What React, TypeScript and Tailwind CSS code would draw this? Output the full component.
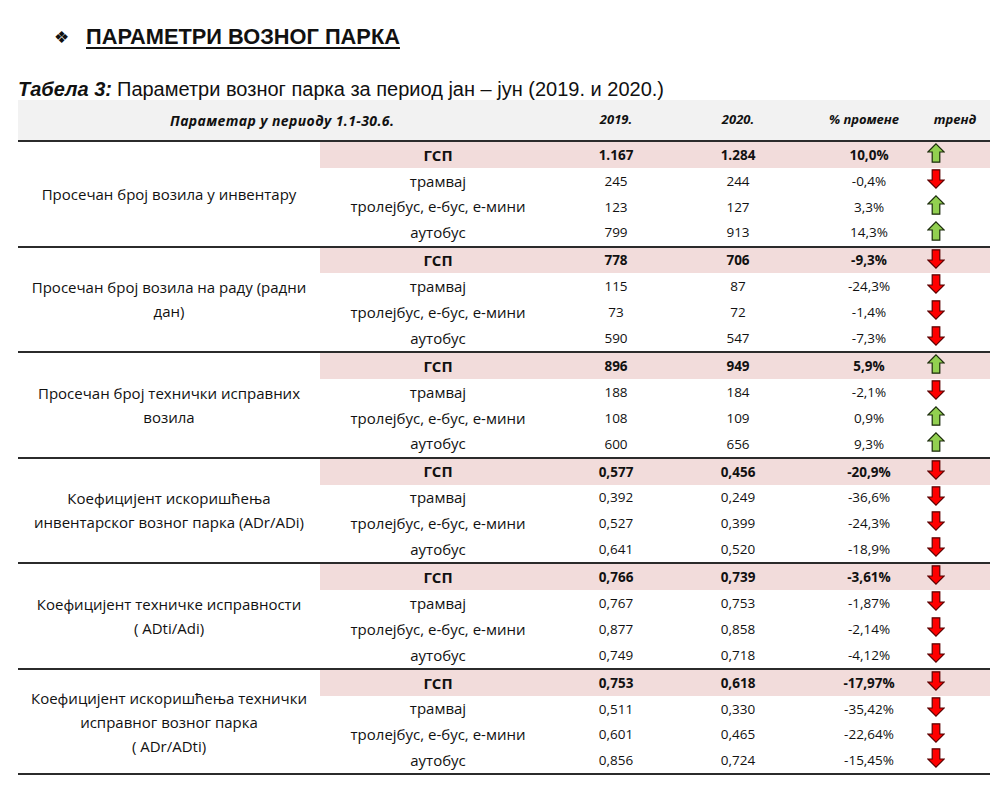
import React from 'react';

// Parameters of the vehicle fleet, Jan–Jun 2019 vs 2020
type Row = { type: string; y19: string; y20: string; pct: string; up: boolean };
type Group = { label: string[]; rows: Row[] };

const TYPES = ['ГСП', 'трамвај', 'тролејбус, е-бус, е-мини', 'аутобус'];

const mk = (data: [string, string, string, boolean][]): Row[] =>
  data.map((d, i) => ({ type: TYPES[i], y19: d[0], y20: d[1], pct: d[2], up: d[3] }));

const groups: Group[] = [
  {
    label: ['Просечан број возила у инвентару'],
    rows: mk([
      ['1.167', '1.284', '10,0%', true],
      ['245', '244', '-0,4%', false],
      ['123', '127', '3,3%', true],
      ['799', '913', '14,3%', true],
    ]),
  },
  {
    label: ['Просечан број возила на раду (радни', 'дан)'],
    rows: mk([
      ['778', '706', '-9,3%', false],
      ['115', '87', '-24,3%', false],
      ['73', '72', '-1,4%', false],
      ['590', '547', '-7,3%', false],
    ]),
  },
  {
    label: ['Просечан број технички исправних', 'возила'],
    rows: mk([
      ['896', '949', '5,9%', true],
      ['188', '184', '-2,1%', false],
      ['108', '109', '0,9%', true],
      ['600', '656', '9,3%', true],
    ]),
  },
  {
    label: ['Коефицијент искоришћења', 'инвентарског возног парка (ADr/ADi)'],
    rows: mk([
      ['0,577', '0,456', '-20,9%', false],
      ['0,392', '0,249', '-36,6%', false],
      ['0,527', '0,399', '-24,3%', false],
      ['0,641', '0,520', '-18,9%', false],
    ]),
  },
  {
    label: ['Коефицијент техничке исправности', '( ADti/Adi)'],
    rows: mk([
      ['0,766', '0,739', '-3,61%', false],
      ['0,767', '0,753', '-1,87%', false],
      ['0,877', '0,858', '-2,14%', false],
      ['0,749', '0,718', '-4,12%', false],
    ]),
  },
  {
    label: ['Коефицијент искоришћења технички', 'исправног возног парка', '( ADr/ADti)'],
    rows: mk([
      ['0,753', '0,618', '-17,97%', false],
      ['0,511', '0,330', '-35,42%', false],
      ['0,601', '0,465', '-22,64%', false],
      ['0,856', '0,724', '-15,45%', false],
    ]),
  },
];

const Arrow: React.FC<{ up: boolean }> = ({ up }) => (
  <svg width="18" height="20" viewBox="0 0 18 20" className="block">
    {up ? (
      <polygon points="9,0.8 17.2,9 12.8,9 12.8,19.2 5.2,19.2 5.2,9 0.8,9" fill="#92d050" stroke="#1a2a0a" strokeWidth="1.2" />
    ) : (
      <polygon points="9,19.2 17.2,11 12.8,11 12.8,0.8 5.2,0.8 5.2,11 0.8,11" fill="#ff0000" stroke="#5a0000" strokeWidth="1.2" />
    )}
  </svg>
);

const cols = 'grid grid-cols-[302px_236px_120px_124px_120px_70px]';

export default function App() {
  return (
    <div className="w-[997px] h-[800px] bg-white pl-[18px] text-[#111]" style={{ fontFamily: '"Open Sans", sans-serif' }}>
      {/* Section title */}
      <div className="h-[74px] flex items-center pl-[36px] gap-[17px] font-['Liberation_Sans',sans-serif]">
        <span className="text-[17px] leading-none">❖</span>
        <span className="text-[21.8px] font-bold underline decoration-2 underline-offset-[3px] leading-none">
          ПАРАМЕТРИ ВОЗНОГ ПАРКА
        </span>
      </div>

      {/* Caption */}
      <div className="h-[26px] flex items-center text-[20px] leading-none font-['Liberation_Sans',sans-serif] pt-[4px]">
        <span className="font-bold italic">Табела 3:</span>
        <span className="ml-[5px]">Параметри возног парка за период јан – јун (2019. и 2020.)</span>
      </div>

      <div className="w-[972px]">
        {/* Header */}
        <div className={`${cols} h-[42px] bg-[#f2f2f2] border-b-2 border-[#2b2b2b] items-center text-[13px] font-bold italic`}>
          <div className="col-span-2 pl-[152px] text-left text-[14px] tracking-[0.4px]">Параметар у периоду 1.1-30.6.</div>
          <div className="text-center">2019.</div>
          <div className="text-center">2020.</div>
          <div className="text-center pl-[8px]">% промене</div>
          <div className="text-center">тренд</div>
        </div>

        {groups.map((g, gi) => (
          <div key={gi} className={`${cols} border-b-2 border-[#2b2b2b]`}>
            <div className="row-span-4 flex flex-col items-center justify-center text-[15px] leading-[24px] text-center">
              {g.label.map((l, li) => (
                <div key={li}>{l}</div>
              ))}
            </div>
            {g.rows.map((r, ri) => {
              const bold = ri === 0;
              const band = bold ? 'bg-[#f2dcdb]' : '';
              const weight = bold ? 'font-bold' : '';
              return (
                <React.Fragment key={ri}>
                  <div className={`h-[25.9px] flex items-center justify-center text-[15px] ${band} ${weight}`}>{r.type}</div>
                  <div className={`h-[25.9px] flex items-center justify-center text-[13.5px] ${band} ${weight}`}>{r.y19}</div>
                  <div className={`h-[25.9px] flex items-center justify-center text-[13.5px] ${band} ${weight}`}>{r.y20}</div>
                  <div className={`h-[25.9px] flex items-center justify-center pl-[18px] text-[13.5px] ${band} ${weight}`}>{r.pct}</div>
                  <div className={`h-[25.9px] pl-[7px] pt-[1px] ${band}`}>
                    <Arrow up={r.up} />
                  </div>
                </React.Fragment>
              );
            })}
          </div>
        ))}
      </div>
    </div>
  );
}
